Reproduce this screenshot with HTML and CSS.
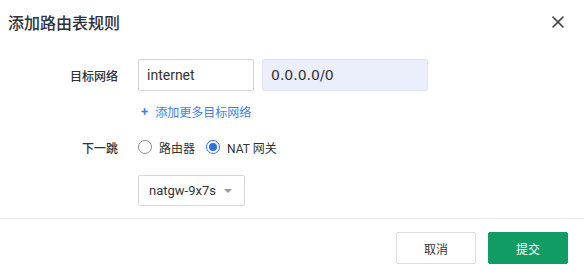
FILE: index.html
```html
<!DOCTYPE html>
<html lang="zh-CN">
<head>
    <meta charset="UTF-8">
    <meta name="viewport" content="width=device-width, initial-scale=1.0">
    <title>添加路由表规则</title>
    <link rel="stylesheet" href="styles.css">
</head>
<body>
    <div class="dialog">
        <div class="dialog-header">
            <h2>添加路由表规则</h2>
            <a href="#" class="close-btn" aria-label="关闭">
                <svg width="12" height="12" viewBox="0 0 12 12">
                    <path d="M1 1 L11 11 M11 1 L1 11" stroke="#3a3d45" stroke-width="1.6" stroke-linecap="round"/>
                </svg>
            </a>
        </div>
        <div class="dialog-body">
            <div class="form-row row-target">
                <label class="form-label">目标网络</label>
                <div class="form-controls">
                    <input type="text" class="input input-name" value="internet">
                    <input type="text" class="input input-cidr" value="0.0.0.0/0">
                </div>
            </div>
            <div class="form-row row-link">
                <span class="form-label"></span>
                <a href="#" class="add-link"><span class="plus">+</span>添加更多目标网络</a>
            </div>
            <div class="form-row row-hop">
                <label class="form-label">下一跳</label>
                <div class="radio-group">
                    <label class="radio"><span class="radio-dot"></span>路由器</label>
                    <label class="radio checked"><span class="radio-dot"></span>NAT 网关</label>
                </div>
            </div>
            <div class="form-row row-select">
                <span class="form-label"></span>
                <div class="select">
                    <span>natgw-9x7s</span>
                    <span class="caret"></span>
                </div>
            </div>
        </div>
        <div class="dialog-footer">
            <button class="btn">取消</button>
            <button class="btn btn-primary">提交</button>
        </div>
    </div>
</body>
</html>
```

FILE: styles.css
```css
body, html {
    margin: 0;
    padding: 0;
    background-color: #fff;
    font-family: Roboto, "Noto Sans CJK SC", sans-serif;
    color: #333;
}
.dialog {
    width: 584px;
}
.dialog-header {
    height: 44px;
    display: flex;
    justify-content: space-between;
    align-items: center;
    padding: 0 20px 0 8px;
}
.dialog-header h2 {
    margin: 0;
    font-size: 16px;
    font-weight: 500;
    color: #2f3239;
}
.close-btn {
    display: flex;
    width: 12px;
    height: 12px;
}
.dialog-body {
    padding: 15px 0 12px;
}
.form-row {
    display: flex;
    align-items: center;
}
.form-label {
    width: 118px;
    margin-right: 20px;
    text-align: right;
    font-size: 12px;
    font-weight: 500;
    color: #2f3239;
    flex-shrink: 0;
}
.row-target {
    height: 32px;
}
.form-controls {
    display: flex;
    gap: 8px;
}
.input {
    box-sizing: border-box;
    height: 32px;
    border: 1px solid #d6d6d6;
    border-radius: 2px;
    padding: 0 8px;
    font-family: Roboto, sans-serif;
    font-size: 14px;
    color: #333;
    outline: none;
}
.input-name {
    width: 116px;
}
.input-cidr {
    width: 166px;
    background-color: #ebeffb;
    border-color: #dfe3ef;
    font-family: "DejaVu Sans", sans-serif;
}
.row-link {
    margin-top: 10px;
    height: 20px;
}
.add-link {
    font-size: 12px;
    color: #3d7ee6;
    text-decoration: none;
    display: flex;
    align-items: center;
}
.plus {
    font-size: 13px;
    font-weight: 600;
    margin: 0 7px 0 3px;
}
.row-hop {
    margin-top: 14px;
    height: 24px;
}
.radio-group {
    display: flex;
    gap: 11px;
}
.radio {
    display: flex;
    align-items: center;
    gap: 7px;
    font-size: 12px;
    color: #333;
}
.radio-dot {
    box-sizing: border-box;
    width: 14px;
    height: 14px;
    border: 1px solid #8d8f94;
    border-radius: 50%;
    display: flex;
    align-items: center;
    justify-content: center;
}
.radio.checked .radio-dot {
    border-color: #2f6fe4;
}
.radio.checked .radio-dot::after {
    content: "";
    width: 8px;
    height: 8px;
    border-radius: 50%;
    background-color: #2f6fe4;
}
.row-select {
    margin-top: 16px;
}
.select {
    box-sizing: border-box;
    width: 107px;
    height: 31px;
    border: 1px solid #d6d6d6;
    border-radius: 2px;
    padding: 0 10px;
    display: flex;
    justify-content: space-between;
    align-items: center;
    font-size: 13px;
    color: #333;
}
.caret {
    width: 0;
    height: 0;
    border-left: 4px solid transparent;
    border-right: 4px solid transparent;
    border-top: 4px solid #999;
    margin-right: 2px;
}
.dialog-footer {
    border-top: 1px solid #e8e8e8;
    padding: 13px 16px 8px;
    display: flex;
    justify-content: flex-end;
    gap: 12px;
}
.btn {
    width: 80px;
    height: 32px;
    border: 1px solid #dcdcdc;
    border-radius: 2px;
    background-color: #fff;
    font-family: "Noto Sans CJK SC", sans-serif;
    font-size: 12px;
    color: #333;
    cursor: pointer;
}
.btn-primary {
    background-color: #129c65;
    border-color: #129c65;
    color: #fff;
}
```
